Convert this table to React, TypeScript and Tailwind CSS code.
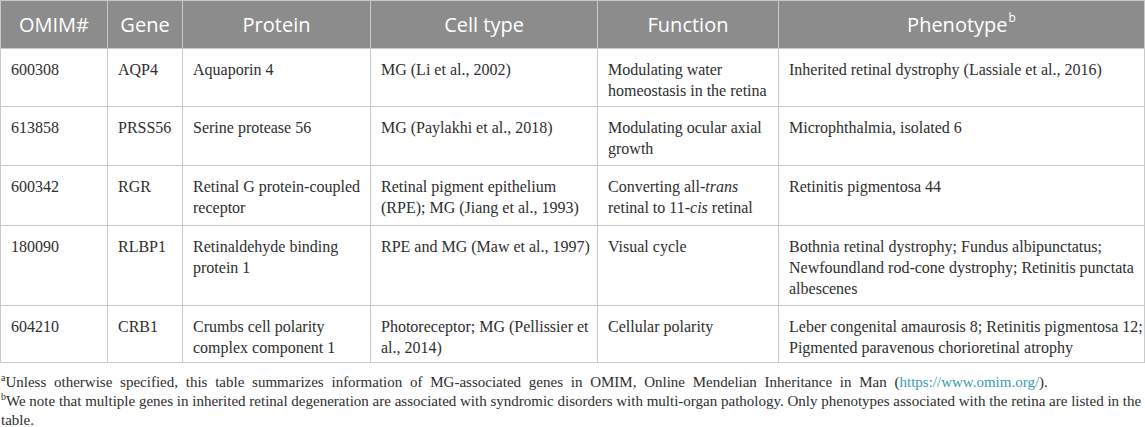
import React from "react";

type Row = { omim: string; gene: string; protein: React.ReactNode; cell: React.ReactNode; fn: React.ReactNode; pheno: React.ReactNode; h: string };

const rows: Row[] = [
  { omim: "600308", gene: "AQP4", protein: "Aquaporin 4", cell: "MG (Li et al., 2002)", fn: "Modulating water homeostasis in the retina", pheno: "Inherited retinal dystrophy (Lassiale et al., 2016)", h: "h-[58px]" },
  { omim: "613858", gene: "PRSS56", protein: "Serine protease 56", cell: "MG (Paylakhi et al., 2018)", fn: "Modulating ocular axial growth", pheno: "Microphthalmia, isolated 6", h: "h-[59px]" },
  { omim: "600342", gene: "RGR", protein: "Retinal G protein-coupled receptor", cell: "Retinal pigment epithelium (RPE); MG (Jiang et al., 1993)", fn: (<>Converting all-<i>trans</i> retinal to 11-<i>cis</i> retinal</>), pheno: "Retinitis pigmentosa 44", h: "h-[60px]" },
  { omim: "180090", gene: "RLBP1", protein: "Retinaldehyde binding protein 1", cell: "RPE and MG (Maw et al., 1997)", fn: "Visual cycle", pheno: "Bothnia retinal dystrophy; Fundus albipunctatus; Newfoundland rod-cone dystrophy; Retinitis punctata albescenes", h: "h-[80px]" },
  { omim: "604210", gene: "CRB1", protein: "Crumbs cell polarity complex component 1", cell: "Photoreceptor; MG (Pellissier et al., 2014)", fn: "Cellular polarity", pheno: "Leber congenital amaurosis 8; Retinitis pigmentosa 12; Pigmented paravenous chorioretinal atrophy", h: "h-[57px]" },
];

const headers = ["OMIM#", "Gene", "Protein", "Cell type", "Function", "Phenotype"];
const widths = ["w-[107px]", "w-[75px]", "w-[188px]", "w-[227px]", "w-[181px]", "w-[366px]"];

export default function App() {
  return (
    <div className="w-[1145px] bg-white font-['Liberation_Serif','Times_New_Roman',serif]">
      <table className="border-collapse table-fixed w-[1144px] border border-[#c9c9c9]">
        <colgroup>
          {widths.map((w, i) => (
            <col key={i} className={w} />
          ))}
        </colgroup>
        <thead>
          <tr className="h-[48px] bg-[#8c8c8c]">
            {headers.map((h, i) => (
              <th
                key={i}
                className="border border-[#c9c9c9] text-white font-normal text-[20px] text-center align-middle px-1 font-['Open_Sans','Noto_Sans',sans-serif]"
              >
                {h}
                {i === 5 && <span className="text-[12px] align-top relative top-[-1px] ml-[1px]">b</span>}
              </th>
            ))}
          </tr>
        </thead>
        <tbody>
          {rows.map((r, i) => (
            <tr key={i} className={r.h}>
              {[r.omim, r.gene, r.protein, r.cell, r.fn, r.pheno].map((c, j) => (
                <td
                  key={j}
                  className="border border-[#c9c9c9] align-top text-left text-[16px] leading-[21px] text-[#2e2e2e] pl-[10px] pr-0 pt-[10px] pb-[4px]"
                >
                  {c}
                </td>
              ))}
            </tr>
          ))}
        </tbody>
      </table>
      <div className="pl-[1px] pt-[10px] text-[15px] leading-[19px] text-[#2e2e2e]">
        <p className="[word-spacing:4px]">
          <span className="text-[10px] leading-none align-top [word-spacing:0px]">a</span>Unless otherwise specified, this table summarizes information of MG-associated genes in OMIM, Online Mendelian Inheritance in Man (<span className="text-[#3a9bb5]">https://www.omim.org/</span>).
        </p>
        <p>
          <span className="text-[10px] leading-none align-top">b</span>We note that multiple genes in inherited retinal degeneration are associated with syndromic disorders with multi-organ pathology. Only phenotypes associated with the retina are listed in the table.
        </p>
      </div>
    </div>
  );
}
